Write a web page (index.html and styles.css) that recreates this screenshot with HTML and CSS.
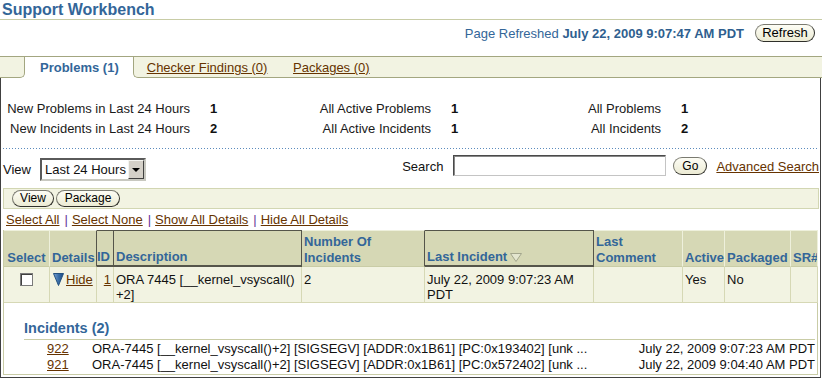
FILE: index.html
```html
<!DOCTYPE html>
<html>
<head>
<meta charset="utf-8">
<title>Support Workbench</title>
<link rel="stylesheet" href="styles.css">
</head>
<body>
<div class="page">
  <h1 class="title">Support Workbench</h1>
  <div class="refresh-row">
    <span class="refreshed">Page Refreshed <b>July 22, 2009 9:07:47 AM PDT</b></span>
    <button class="btn btn-refresh">Refresh</button>
  </div>
  <div class="tabs">
    <div class="tab-stub"></div>
    <div class="tab-active">Problems (1)</div>
    <div class="tab-rest">
      <a class="tab-link" href="#">Checker Findings (0)</a>
      <a class="tab-link second" href="#">Packages (0)</a>
    </div>
  </div>
  <div class="frame">
    <div class="summary">
      <span class="lbl">New Problems in Last 24 Hours</span><span class="val">1</span>
      <span class="lbl">All Active Problems</span><span class="val">1</span>
      <span class="lbl">All Problems</span><span class="val">1</span>
      <span class="lbl">New Incidents in Last 24 Hours</span><span class="val">2</span>
      <span class="lbl">All Active Incidents</span><span class="val">1</span>
      <span class="lbl">All Incidents</span><span class="val">2</span>
    </div>
    <div class="dots"></div>
    <div class="filter-row">
      <div class="view-group">
        <span>View</span>
        <div class="select"><span class="select-text">Last 24 Hours</span><span class="select-arrow"><span class="tri"></span></span></div>
      </div>
      <div class="search-group">
        <span class="search-lbl">Search</span>
        <input class="search-input" type="text">
        <button class="btn btn-go">Go</button>
        <a class="adv" href="#">Advanced Search</a>
      </div>
    </div>
    <div class="toolbar">
      <button class="btn btn-view">View</button>
      <button class="btn btn-package">Package</button>
    </div>
    <div class="select-links">
      <a href="#">Select All</a><span class="sep">|</span><a href="#">Select None</a><span class="sep">|</span><a href="#">Show All Details</a><span class="sep">|</span><a href="#">Hide All Details</a>
    </div>
    <table class="grid">
      <colgroup>
        <col class="c-select"><col class="c-details"><col class="c-id"><col class="c-desc"><col class="c-num"><col class="c-last"><col class="c-comment"><col class="c-active"><col class="c-pack"><col class="c-sr">
      </colgroup>
      <tr class="head">
        <th class="center">Select</th>
        <th class="before-sort">Details</th>
        <th class="sort th-id">ID</th>
        <th class="sort">Description</th>
        <th class="before-sort">Number Of Incidents</th>
        <th class="sort">Last Incident<svg class="sort-ind" width="12" height="9" viewBox="0 0 12 9"><polygon points="0.5,0.5 11.5,0.5 6,8.5" fill="#e4e6cf" stroke="#a3a68c" stroke-width="1"/></svg></th>
        <th>Last Comment</th>
        <th>Active</th>
        <th>Packaged</th>
        <th>SR#</th>
      </tr>
      <tr class="data">
        <td class="center"><span class="checkbox"></span></td>
        <td class="before-sort"><span class="disclose"><svg width="11" height="13" viewBox="0 0 11 13"><defs><linearGradient id="tg" x1="0" y1="0" x2="1" y2="0"><stop offset="0" stop-color="#7aa3d6"/><stop offset="0.5" stop-color="#3a6ea8"/><stop offset="1" stop-color="#1c4a80"/></linearGradient></defs><polygon points="0.5,0.5 10.5,0.5 5.5,12.5" fill="url(#tg)" stroke="#23507f" stroke-width="1"/></svg><a href="#">Hide</a></span></td>
        <td class="id-cell before-sort"><a href="#">1</a></td>
        <td class="before-sort">ORA 7445 [__kernel_vsyscall()<wbr>+2]</td>
        <td class="before-sort">2</td>
        <td class="before-sort">July 22, 2009 9:07:23 AM PDT</td>
        <td></td>
        <td>Yes</td>
        <td>No</td>
        <td></td>
      </tr>
      <tr class="detail">
        <td colspan="10">
          <div class="inc-head">Incidents (2)</div>
          <div class="inc-row"><span class="inc-id"><a href="#">922</a></span><span class="inc-desc">ORA-7445 [__kernel_vsyscall()+2] [SIGSEGV] [ADDR:0x1B61] [PC:0x193402] [unk ...</span><span class="inc-date">July 22, 2009 9:07:23 AM PDT</span></div>
          <div class="inc-row"><span class="inc-id"><a href="#">921</a></span><span class="inc-desc">ORA-7445 [__kernel_vsyscall()+2] [SIGSEGV] [ADDR:0x1B61] [PC:0x572402] [unk ...</span><span class="inc-date">July 22, 2009 9:04:40 AM PDT</span></div>
        </td>
      </tr>
    </table>
  </div>
</div>
</body>
</html>
```
FILE: styles.css
```css
* { box-sizing: border-box; }
html, body { margin: 0; padding: 0; background: #fff; }
body {
  font-family: "Liberation Sans", Arial, sans-serif;
  font-size: 13px;
  color: #111;
  width: 822px;
  height: 379px;
  overflow: hidden;
}
a { color: #663300; text-decoration: underline; }

.page { width: 822px; }

.title {
  margin: 0;
  font-size: 16px;
  font-weight: bold;
  color: #336699;
  line-height: 19px;
  height: 20px;
  padding-left: 2px;
  border-bottom: 1px solid #c8cca6;
}

.refresh-row {
  display: flex;
  justify-content: flex-end;
  align-items: center;
  gap: 11px;
  padding: 4px 7px 0 0;
  height: 22px;
}
.refreshed { color: #336699; }
.refreshed b { color: #2f5f8f; }

.btn {
  font-family: "Liberation Sans", Arial, sans-serif;
  font-size: 12px;
  color: #000;
  background: linear-gradient(#fdfdf5, #ecebd4);
  border: 1px solid;
  border-color: #7a7a70 #2f2f2a #2f2f2a #7a7a70;
  border-radius: 9px;
  padding: 0;
  height: 17px;
  line-height: 15px;
  text-align: center;
}
.btn-refresh { width: 60px; height: 18px; font-size: 13px; line-height: 16px; }
.btn-go { width: 34px; height: 18px; line-height: 16px; }
.btn-view { width: 42px; }
.btn-package { width: 64px; }

.tabs {
  display: flex;
  margin-top: 14px;
  border-top: 1px solid #a3a680;
  height: 22px;
}
.tab-stub {
  width: 25px;
  background: #f2f3e2;
  border-right: 1px solid #a3a680;
  border-bottom: 1px solid #a3a680;
  border-bottom-right-radius: 5px;
}
.tab-active {
  padding: 1px 14px 0 15px;
  line-height: 20px;
  font-weight: bold;
  color: #336699;
  background: #fff;
}
.tab-rest {
  flex: 1;
  background: #f2f3e2;
  border-left: 1px solid #a3a680;
  border-bottom: 1px solid #a3a680;
  border-bottom-left-radius: 5px;
  padding: 1px 0 0 13px;
  line-height: 19px;
}
.tab-link.second { margin-left: 22px; }

.frame {
  width: 821px;
  height: 300px;
  border: 1px solid #404040;
  border-top: none;
}

.summary {
  display: grid;
  grid-template-columns: 189px 60px 181px 60px 170px 1fr;
  padding-top: 21px;
  line-height: 20px;
}
.lbl { text-align: right; color: #1a1a1a; white-space: nowrap; }
.val { padding-left: 20px; font-weight: bold; }

.dots {
  margin: 9px 2px 0 2px;
  height: 1px;
  background-image: linear-gradient(to right, #5b8bbd 0, #5b8bbd 1px, transparent 1px);
  background-size: 3px 1px;
  background-repeat: repeat-x;
}

.filter-row {
  display: flex;
  justify-content: space-between;
  align-items: flex-start;
  margin-top: 6px;
  padding: 0 1px 0 2px;
}
.view-group {
  display: flex;
  align-items: center;
  gap: 9px;
  margin-top: 3px;
}
.select {
  width: 106px;
  height: 23px;
  display: flex;
  align-items: center;
  background: #fff;
  border: 2px solid;
  border-color: #5a5a5a #c8c8c0 #c8c8c0 #5a5a5a;
  padding-left: 3px;
}
.select-text { flex: 1; }
.select-arrow {
  width: 16px;
  height: 19px;
  background: #d4d0c8;
  border: 1px solid;
  border-color: #f4f4f0 #404040 #404040 #f4f4f0;
  display: flex;
  align-items: center;
  justify-content: center;
}
.tri {
  width: 0;
  height: 0;
  border-left: 4px solid transparent;
  border-right: 4px solid transparent;
  border-top: 4px solid #000;
}
.search-group {
  display: flex;
  align-items: center;
}
.search-lbl { padding-top: 1px; }
.search-input {
  width: 213px;
  height: 21px;
  margin: 0 7px 0 10px;
  border: 1px solid;
  border-color: #4a4a4a #c4c4c4 #c4c4c4 #4a4a4a;
  box-shadow: inset 1px 1px 0 #888;
  background: #fff;
  padding: 0;
}
.adv { margin-left: 9px; padding-top: 1px; }

.toolbar {
  margin: 7px 1px 0 2px;
  height: 21px;
  border: 1px solid #d2d6b2;
  background: #f2f3e2;
  display: flex;
  align-items: center;
  gap: 2px;
  padding-left: 8px;
}

.select-links {
  padding: 3px 0 0 5px;
  line-height: 16px;
  height: 19px;
}
.sep { color: #663399; margin: 0 4px 0 5px; }

.grid {
  border-collapse: separate;
  border-spacing: 0;
  table-layout: fixed;
  width: 815px;
  margin: 2px 0 0 2px;
  border-left: 1px solid #c9cca6;
}
.c-select { width: 46px; }
.c-details { width: 47px; }
.c-id { width: 17px; }
.c-desc { width: 188px; }
.c-num { width: 123px; }
.c-last { width: 169px; }
.c-comment { width: 89px; }
.c-active { width: 42px; }
.c-pack { width: 66px; }
.c-sr { width: 27px; }

.grid th {
  background: #d6d8b5;
  color: #336699;
  font-weight: bold;
  text-align: left;
  vertical-align: bottom;
  padding: 0 0 0 2px;
  line-height: 16px;
  border-top: 1px solid #eef0dc;
  border-right: 1px solid #eef0dc;
  border-bottom: 1px solid #c9cca6;
  overflow: hidden;
}
.grid tr.head { height: 37px; }
.grid th.center { text-align: center; padding: 0; }
.grid th.sort {
  border-top-color: #55554a;
  border-right-color: #55554a;
  border-bottom: 2px solid #55554a;
}
.grid th.before-sort { border-right-color: #55554a; }
.grid th.th-id { padding-left: 0; }
.sort-ind { margin-left: 3px; vertical-align: -1px; }

.grid tr.data { height: 36px; }
.grid td {
  background: #f2f3e2;
  vertical-align: top;
  padding: 5px 2px 0 2px;
  line-height: 15px;
  border-right: 1px solid #d6d8b5;
  border-bottom: 1px solid #d6d8b5;
}
.grid td.center { text-align: center; }
.grid td.id-cell { text-align: right; padding-right: 2px; }
.checkbox {
  display: block;
  width: 13px;
  height: 13px;
  margin: 1px auto 0;
  background: #fff;
  border: 1px solid #7a7a7a;
  box-shadow: inset 1px 1px 0 #404040;
}
.disclose { display: flex; align-items: flex-start; gap: 2px; padding-left: 1px; }
.disclose svg { margin-top: 1px; flex: none; }

.grid tr.detail td {
  background: #fff;
  padding: 15px 2px 1px 20px;
  line-height: 16px;
  border-right: 1px solid #c9cca6;
  border-bottom: 1px solid #c9cca6;
}
.inc-head {
  font-size: 14.5px;
  font-weight: bold;
  color: #336699;
  line-height: 20px;
  padding-bottom: 1px;
  border-bottom: 1px solid #c9cca6;
  margin-bottom: 1px;
}
.inc-row {
  display: flex;
  line-height: 16px;
  white-space: nowrap;
}
.inc-id { width: 68px; padding-left: 23px; flex: none; }
.inc-desc { flex: 1; }
.inc-date { flex: none; }
```
